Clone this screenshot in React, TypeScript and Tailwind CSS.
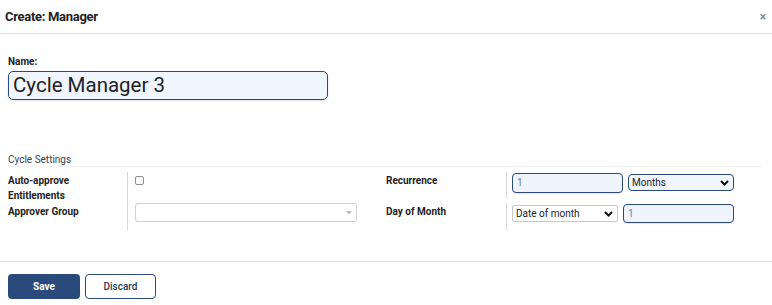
import React from "react";

export default function App() {
  return (
    <div className="w-[772px] h-[305px] bg-white text-[#222] overflow-hidden" style={{ fontFamily: "Roboto, 'Liberation Sans', sans-serif" }}>
      {/* Header */}
      <div className="h-[34px] border-b border-[#e2e2ea] flex items-center justify-between pl-[5px] pr-[6px]">
        <div className="text-[13px] font-bold text-[#222] tracking-[-0.3px]">Create: Manager</div>
        <div className="text-[12px] font-bold text-[#7a8aa0] leading-none">×</div>
      </div>

      {/* Name */}
      <div className="pl-[8px] pt-[21px]">
        <div className="text-[10px] font-bold leading-[14px] h-[15px]">Name:</div>
        <input
          readOnly
          value="Cycle Manager 3"
          className="mt-[1px] w-[320px] h-[29px] rounded-[5px] border border-[#2b4a7c] bg-[#f1f5fd] px-[4px] text-[20.5px] text-[#222] outline-none shadow-[0_1px_2px_rgba(0,0,0,0.12)]"
        />
      </div>

      {/* Cycle Settings */}
      <div className="pl-[8px] pr-[10px] mt-[53px]">
        <div className="text-[10px] text-[#3a4252] leading-[13px] border-b border-[#f0f0f3]">Cycle Settings</div>
        <div className="flex mt-[5px]">
          {/* Left half */}
          <div className="w-[378px] flex flex-col">
            <div className="flex h-[31px]">
              <div className="w-[120px] border-r border-[#d8d8d8] text-[10px] font-bold leading-[15px] pt-[1px]">
                Auto-approve
                <br />
                Entitlements
              </div>
              <div className="pl-[7px] pt-[4px]">
                <div className="w-[9px] h-[9px] rounded-[2px] border border-[#8a8f99] bg-white" />
              </div>
            </div>
            <div className="flex h-[27px]">
              <div className="w-[120px] border-r border-[#d8d8d8] text-[10px] font-bold leading-[15px] pt-[1px]">Approver Group</div>
              <div className="pl-[7px] pt-[0px]">
                <div className="w-[222px] h-[19px] rounded-[3px] border border-[#cfcfd4] bg-white flex items-center justify-end pr-[4px]">
                  <svg width="6" height="4" viewBox="0 0 6 4">
                    <path d="M0 0 L6 0 L3 3.5 Z" fill="#b5b8bf" />
                  </svg>
                </div>
              </div>
            </div>
          </div>
          {/* Right half */}
          <div className="flex flex-col gap-[5px]">
            <div className="flex h-[26px]">
              <div className="w-[121px] border-r border-[#d8d8d8] text-[10px] font-bold leading-[15px] pt-[1px]">Recurrence</div>
              <div className="pl-[5px] flex gap-[5px] items-start">
                <div className="w-[111px] h-[20px] rounded-[4px] border border-[#2b4a7c] bg-[#eef3fc] text-[10px] text-[#6a7fa6] pl-[4px] leading-[18px] mt-[1px] shadow-[0_1px_1px_rgba(0,0,0,0.1)]">1</div>
                <div className="w-[106px] h-[17px] rounded-[4px] border border-[#2b4a7c] bg-[#f1f5fd] text-[10px] text-[#222] pl-[3px] leading-[15px] flex items-center justify-between pr-[4px] mt-[2px]">
                  <span>Months</span>
                  <svg width="9" height="6" viewBox="0 0 9 6">
                    <path d="M1 1 L4.5 4.5 L8 1" stroke="#111" strokeWidth="2" fill="none" />
                  </svg>
                </div>
              </div>
            </div>
            <div className="flex h-[27px]">
              <div className="w-[121px] border-r border-[#d8d8d8] text-[10px] font-bold leading-[15px] pt-[1px]">Day of Month</div>
              <div className="pl-[5px] flex gap-[5px] items-start">
                <div className="w-[106px] h-[17px] rounded-[2px] border border-[#c8c8cc] bg-white text-[10px] text-[#222] pl-[3px] flex items-center justify-between pr-[4px] mt-[2px]">
                  <span>Date of month</span>
                  <svg width="9" height="6" viewBox="0 0 9 6">
                    <path d="M1 1 L4.5 4.5 L8 1" stroke="#111" strokeWidth="2" fill="none" />
                  </svg>
                </div>
                <div className="w-[111px] h-[19px] rounded-[4px] border border-[#2b4a7c] bg-[#eef3fc] text-[10px] text-[#6a7fa6] pl-[4px] leading-[17px] mt-[1px] shadow-[0_1px_1px_rgba(0,0,0,0.1)]">1</div>
              </div>
            </div>
          </div>
        </div>
      </div>

      {/* Footer */}
      <div className="mt-[31px] border-t border-[#e0e0e4] pl-[8px] pt-[12px] flex gap-[5px]">
        <button className="w-[72px] h-[25px] rounded-[4px] bg-[#2b4a7c] text-white text-[10px] font-bold">Save</button>
        <button className="w-[71px] h-[25px] rounded-[4px] border border-[#2b4a7c] bg-white text-[#2b3a55] text-[10px] font-medium">Discard</button>
      </div>
    </div>
  );
}
